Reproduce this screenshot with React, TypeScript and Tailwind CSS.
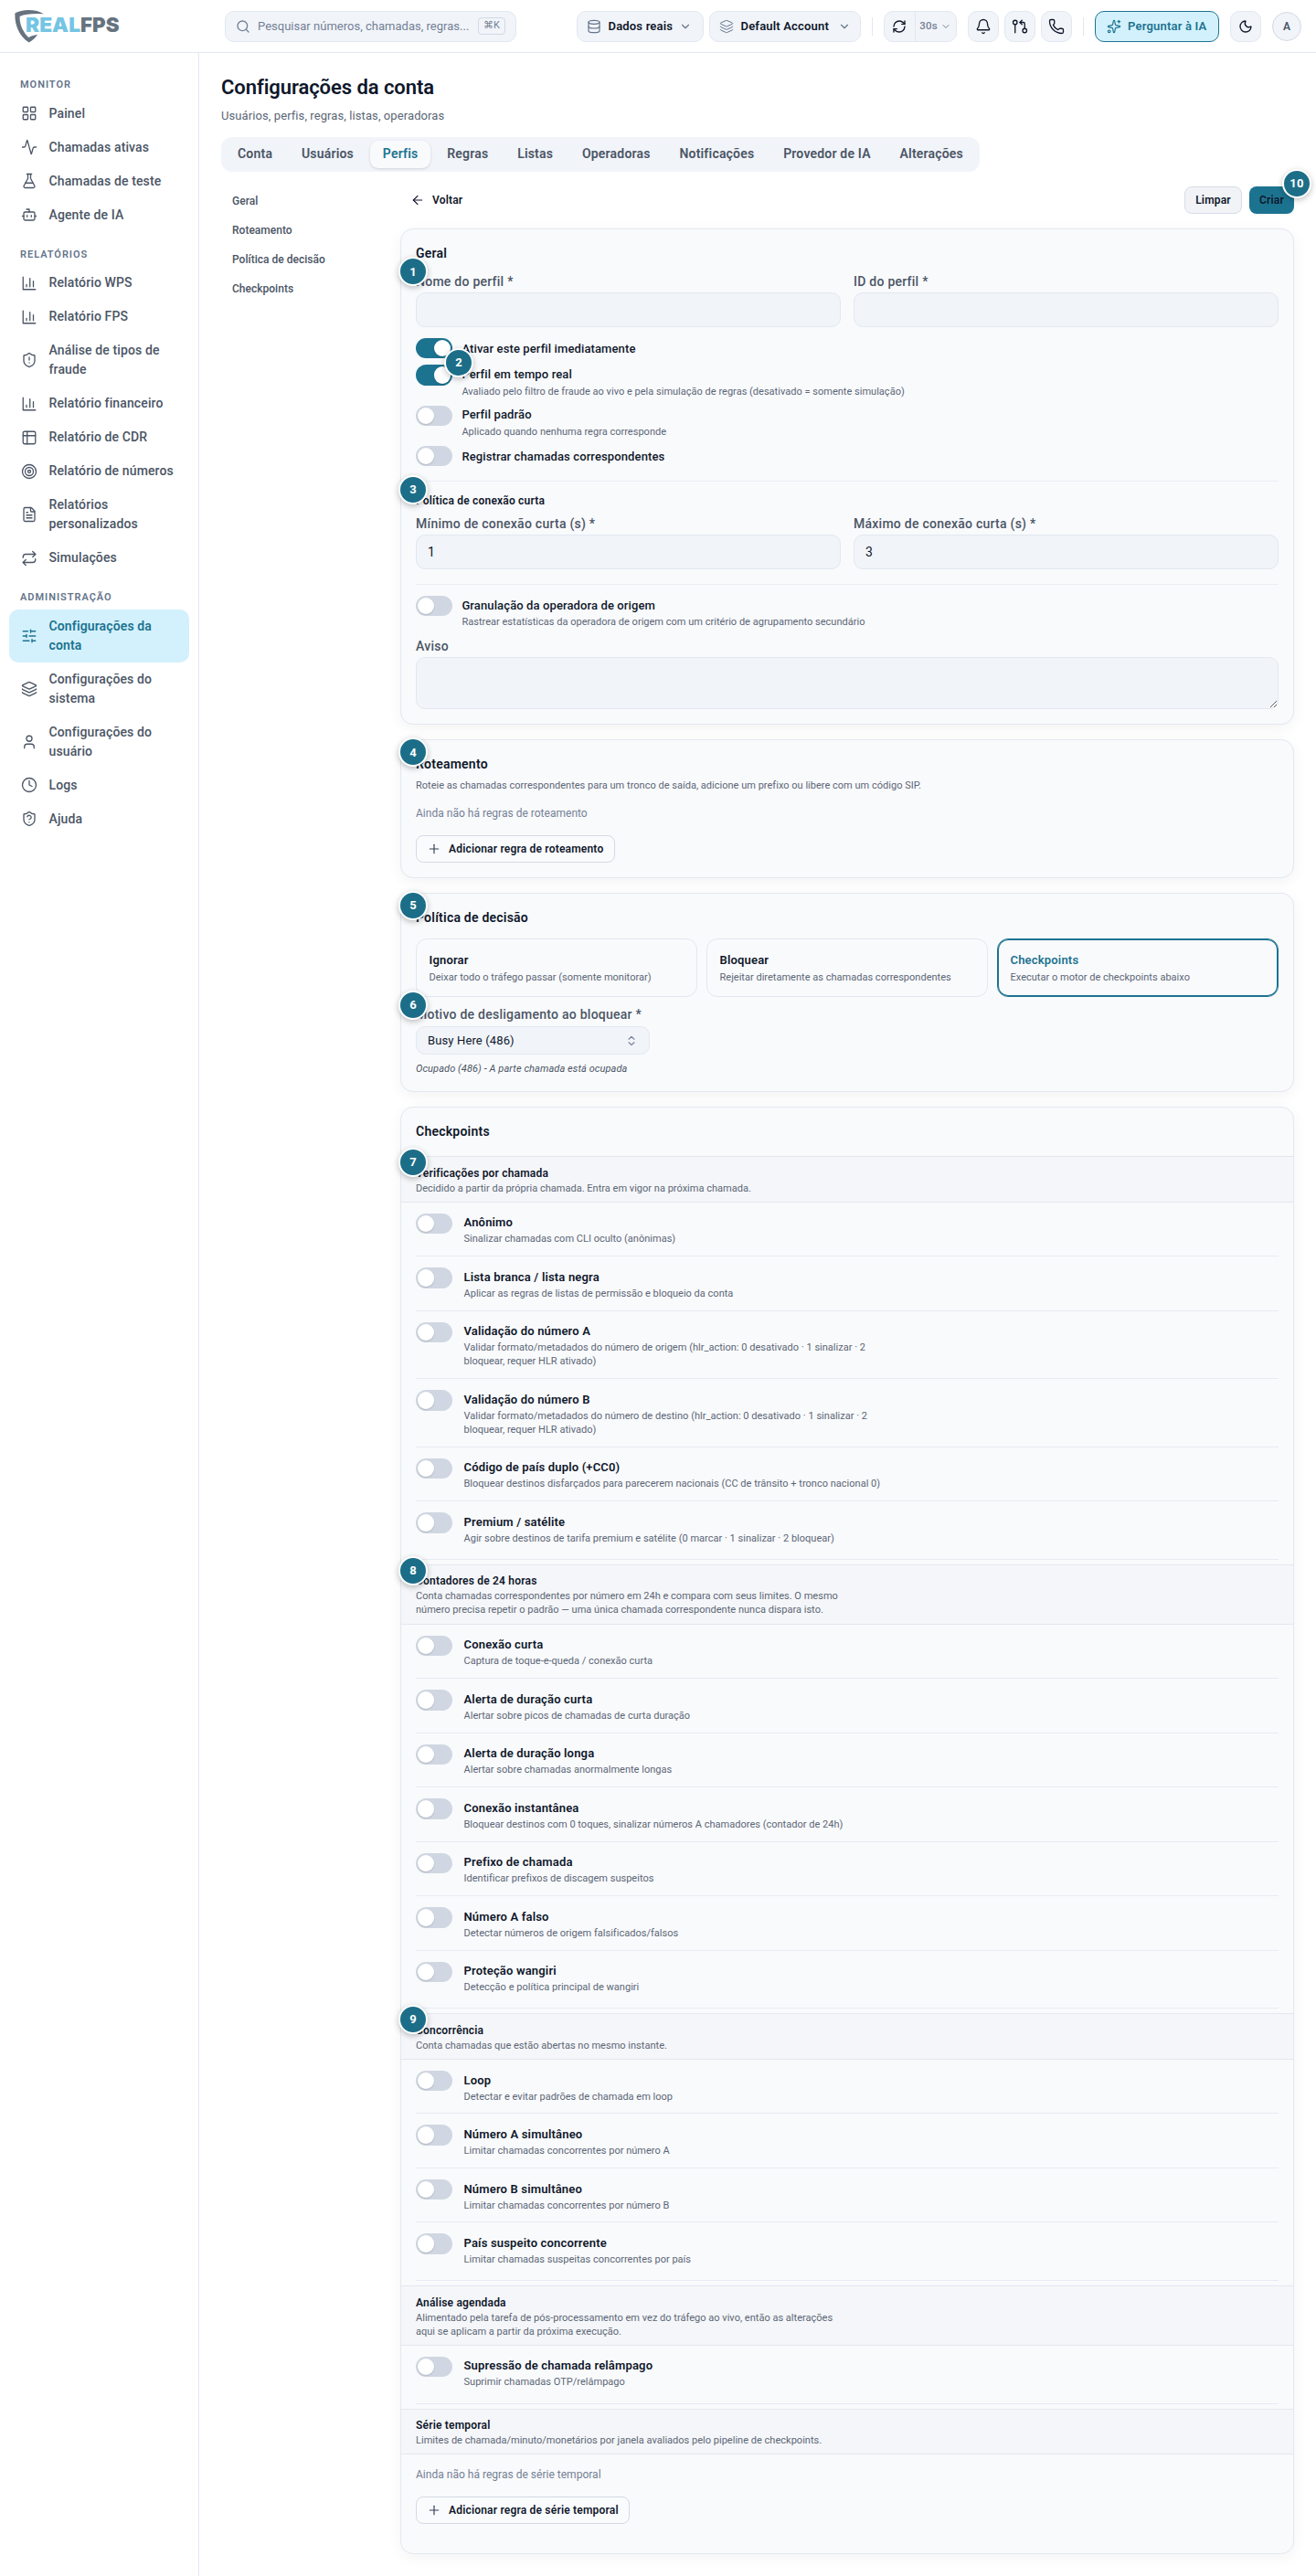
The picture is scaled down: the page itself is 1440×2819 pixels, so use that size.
import type { ReactNode } from 'react';
import clsx from 'clsx';
import {
  Activity,
  ArrowLeft,
  Bell,
  Bot,
  ChevronDown,
  ChevronsUpDown,
  Clock,
  Database,
  FileText,
  FlaskConical,
  GitPullRequestArrow,
  Layers,
  LayoutGrid,
  Moon,
  Phone,
  Plus,
  RefreshCw,
  Repeat,
  Search,
  ShieldAlert,
  ShieldQuestionMark,
  SlidersHorizontal,
  Sparkles,
  Target,
  User,
} from 'lucide-react';

type IconType = (props: { className?: string; strokeWidth?: number }) => ReactNode;

const ChartIcon: IconType = ({ className, strokeWidth = 2 }) => (
  <svg className={className} viewBox="0 0 24 24" fill="none" stroke="currentColor" strokeWidth={strokeWidth} strokeLinecap="round" strokeLinejoin="round">
    <path d="M3 3v18h18" />
    <path d="M18 17V9" />
    <path d="M13 17V5" />
    <path d="M8 17v-3" />
  </svg>
);

const TableIcon: IconType = ({ className, strokeWidth = 2 }) => (
  <svg className={className} viewBox="0 0 24 24" fill="none" stroke="currentColor" strokeWidth={strokeWidth} strokeLinecap="round" strokeLinejoin="round">
    <rect x="3" y="3" width="18" height="18" rx="2" />
    <path d="M3 9h18" />
    <path d="M9 3v18" />
  </svg>
);

const navGroups: { title: string; items: { label: string; icon: IconType; active?: boolean }[] }[] = [
  {
    title: 'Monitor',
    items: [
      { label: 'Painel', icon: LayoutGrid },
      { label: 'Chamadas ativas', icon: Activity },
      { label: 'Chamadas de teste', icon: FlaskConical },
      { label: 'Agente de IA', icon: Bot },
    ],
  },
  {
    title: 'Relatórios',
    items: [
      { label: 'Relatório WPS', icon: ChartIcon },
      { label: 'Relatório FPS', icon: ChartIcon },
      { label: 'Análise de tipos de fraude', icon: ShieldAlert },
      { label: 'Relatório financeiro', icon: ChartIcon },
      { label: 'Relatório de CDR', icon: TableIcon },
      { label: 'Relatório de números', icon: Target },
      { label: 'Relatórios personalizados', icon: FileText },
      { label: 'Simulações', icon: Repeat },
    ],
  },
  {
    title: 'Administração',
    items: [
      { label: 'Configurações da conta', icon: SlidersHorizontal, active: true },
      { label: 'Configurações do sistema', icon: Layers },
      { label: 'Configurações do usuário', icon: User },
      { label: 'Logs', icon: Clock },
      { label: 'Ajuda', icon: ShieldQuestionMark },
    ],
  },
];

const tabs = ['Conta', 'Usuários', 'Perfis', 'Regras', 'Listas', 'Operadoras', 'Notificações', 'Provedor de IA', 'Alterações'];

const anchors = ['Geral', 'Roteamento', 'Política de decisão', 'Checkpoints'];

const decisions = [
  { title: 'Ignorar', text: 'Deixar todo o tráfego passar (somente monitorar)' },
  { title: 'Bloquear', text: 'Rejeitar diretamente as chamadas correspondentes' },
  { title: 'Checkpoints', text: 'Executar o motor de checkpoints abaixo', selected: true },
];

const checkpointGroups: { title: string; text: string; badge?: number; rows: [string, string, boolean?][] }[] = [
  {
    title: 'Verificações por chamada',
    text: 'Decidido a partir da própria chamada. Entra em vigor na próxima chamada.',
    badge: 7,
    rows: [
      ['Anônimo', 'Sinalizar chamadas com CLI oculto (anônimas)'],
      ['Lista branca / lista negra', 'Aplicar as regras de listas de permissão e bloqueio da conta'],
      ['Validação do número A', 'Validar formato/metadados do número de origem (hlr_action: 0 desativado · 1 sinalizar · 2 bloquear, requer HLR ativado)', true],
      ['Validação do número B', 'Validar formato/metadados do número de destino (hlr_action: 0 desativado · 1 sinalizar · 2 bloquear, requer HLR ativado)', true],
      ['Código de país duplo (+CC0)', 'Bloquear destinos disfarçados para parecerem nacionais (CC de trânsito + tronco nacional 0)'],
      ['Premium / satélite', 'Agir sobre destinos de tarifa premium e satélite (0 marcar · 1 sinalizar · 2 bloquear)'],
    ],
  },
  {
    title: 'Contadores de 24 horas',
    text: 'Conta chamadas correspondentes por número em 24h e compara com seus limites. O mesmo número precisa repetir o padrão — uma única chamada correspondente nunca dispara isto.',
    badge: 8,
    rows: [
      ['Conexão curta', 'Captura de toque-e-queda / conexão curta'],
      ['Alerta de duração curta', 'Alertar sobre picos de chamadas de curta duração'],
      ['Alerta de duração longa', 'Alertar sobre chamadas anormalmente longas'],
      ['Conexão instantânea', 'Bloquear destinos com 0 toques, sinalizar números A chamadores (contador de 24h)'],
      ['Prefixo de chamada', 'Identificar prefixos de discagem suspeitos'],
      ['Número A falso', 'Detectar números de origem falsificados/falsos'],
      ['Proteção wangiri', 'Detecção e política principal de wangiri'],
    ],
  },
  {
    title: 'Concorrência',
    text: 'Conta chamadas que estão abertas no mesmo instante.',
    badge: 9,
    rows: [
      ['Loop', 'Detectar e evitar padrões de chamada em loop'],
      ['Número A simultâneo', 'Limitar chamadas concorrentes por número A'],
      ['Número B simultâneo', 'Limitar chamadas concorrentes por número B'],
      ['País suspeito concorrente', 'Limitar chamadas suspeitas concorrentes por país'],
    ],
  },
  {
    title: 'Análise agendada',
    text: 'Alimentado pela tarefa de pós-processamento em vez do tráfego ao vivo, então as alterações aqui se aplicam a partir da próxima execução.',
    rows: [['Supressão de chamada relâmpago', 'Suprimir chamadas OTP/relâmpago']],
  },
];

function Badge({ n, className }: { n: number; className?: string }) {
  return (
    <span
      className={clsx(
        'absolute z-10 flex size-8 items-center justify-center rounded-full border-2 border-white bg-[#1c6e88] text-[13px] font-bold text-white shadow-[0_2px_6px_rgba(0,0,0,0.25)]',
        className,
      )}
    >
      {n}
    </span>
  );
}

function Toggle({ on }: { on?: boolean }) {
  return (
    <span className={clsx('flex h-[22.4px] w-10 shrink-0 items-center rounded-full px-[2px]', on ? 'justify-end bg-[#1c7390]' : 'bg-[#d0d7e2]')}>
      <span className="size-[18.4px] rounded-full bg-white shadow-[0_1px_2px_rgba(0,0,0,0.15)]" />
    </span>
  );
}

function Card({ children, className }: { children: ReactNode; className?: string }) {
  return (
    <section className={clsx('relative rounded-[14px] border border-[#e2e8f0] bg-[#f9fafc] shadow-[0_4px_16px_rgba(0,0,0,0.05)]', className)}>
      {children}
    </section>
  );
}

function CardTitle({ children }: { children: ReactNode }) {
  return <h2 className="text-[14px] leading-[21.5px] font-semibold tracking-[0.016em]">{children}</h2>;
}

function Field({ label, value = '', badge }: { label: string; value?: string; badge?: ReactNode }) {
  return (
    <div className="relative flex-1">
      <label className="block text-[14px] leading-5 font-medium tracking-[0.018em] text-[#4b5565]">{label}</label>
      <input readOnly value={value} className="mt-[2px] block h-[38.2px] w-full rounded-[10px] border border-[#e2e8f0] bg-[#f1f4f9] px-3 text-[14px] text-[#0f172a]" />
      {badge}
    </div>
  );
}

function SwitchRow({ title, text, on, badge }: { title: string; text?: string; on?: boolean; badge?: ReactNode }) {
  return (
    <div className={clsx('relative flex gap-[10.4px]', text ? 'h-[37.2px]' : 'h-[22.4px]')}>
      <Toggle on={on} />
      <div className={text ? 'pt-[1.8px]' : 'pt-[3.4px]'}>
        <p className="text-[13px] leading-[18px] font-medium tracking-[0.009em]">{title}</p>
        {text && <p className="mt-[1.8px] text-[11px] leading-4 text-[#5b6676]">{text}</p>}
      </div>
      {badge}
    </div>
  );
}

function GroupHeader({ title, text, badge }: { title: string; text: string; badge?: number }) {
  return (
    <div className="relative border-y border-[#e2e8f0] bg-[#f5f6f9] px-4 pt-[9.4px] pb-[7.2px]">
      <h3 className="text-[12px] leading-[17px] font-semibold tracking-[0.016em]">{title}</h3>
      <p className="max-w-[470px] text-[11px] leading-[15px] text-[#5b6676]">{text}</p>
      {badge && <Badge n={badge} className="-top-[10.5px] -left-[3px]" />}
    </div>
  );
}

function AddButton({ children }: { children: ReactNode }) {
  return (
    <button className="flex h-[29.6px] items-center gap-[8px] rounded-lg border border-[#d3dae4] bg-[#fafbfd] pr-[11.5px] pl-[11px] text-[12px] font-semibold tracking-[0.016em]">
      <Plus className="size-4 text-[#334155]" strokeWidth={1.75} />
      {children}
    </button>
  );
}

function Logo() {
  return (
    <svg className="mt-px ml-4 h-[38px] w-[118px]" viewBox="0 0 118 38">
      <path
        d="M32 5.2C24-.2 8-.6.4 4.6 0 16 4 29 15.8 36.4 20 34 23 31.5 25 27.8L18.2 29.4 15.4 31C9.5 25.5 5.2 17 5.6 8 12 4.8 22 4.6 32 5.2Z"
        fill="#66737f"
      />
      <text x="12" y="24.5" fontFamily="Inter" fontSize="22" fontWeight="900" textLength="60" lengthAdjust="spacingAndGlyphs" fill="#74c5e3">REAL</text>
      <text x="72" y="24.5" fontFamily="Inter" fontSize="22" fontWeight="900" textLength="42.5" lengthAdjust="spacingAndGlyphs" fill="#66737f">FPS</text>
    </svg>
  );
}

const headerBox = 'flex h-[34px] items-center rounded-[10px] border border-[#e2e8f0] bg-[#f1f4f9]';

function Header() {
  return (
    <header className="flex h-[58px] items-center border-b border-[#e2e8f0] bg-white pr-4">
      <div className="flex w-[246px]">
        <Logo />
      </div>
      <div className={clsx(headerBox, 'w-[319px] justify-between pr-[11px] pl-[11px] text-[13px] text-[#748196]')}>
        <span className="flex items-center gap-2">
          <Search className="size-4" />
          <span>Pesquisar números, chamadas, regras...</span>
        </span>
        <kbd className="flex h-[19px] w-[30px] items-center justify-center rounded border border-[#d3dae4] font-[Roboto,'DejaVu_Sans'] text-[11px]">⌘K</kbd>
      </div>
      <div className="ml-auto flex items-center gap-3">
        <div className="flex gap-[6px] text-[13px] font-semibold tracking-[0.014em]">
          <button className={clsx(headerBox, 'w-[139px] pr-3 pl-[10px]')}>
            <Database className="mr-2 size-4 text-[#64748b]" strokeWidth={1.75} />
            Dados reais
            <ChevronDown className="ml-auto size-[14px] text-[#64748b]" />
          </button>
          <button className={clsx(headerBox, 'w-[166px] pr-[10px] pl-[10px]')}>
            <Layers className="mr-2 size-4 text-[#64748b]" strokeWidth={1.5} />
            Default Account
            <ChevronDown className="ml-auto size-[14px] text-[#64748b]" />
          </button>
        </div>
        <span className="h-5 w-px bg-[#e2e8f0]" />
        <div className={clsx(headerBox, 'w-20')}>
          <span className="flex h-full w-[34px] items-center justify-center border-r border-[#e2e8f0]">
            <RefreshCw className="size-4" />
          </span>
          <span className="flex flex-1 items-center justify-center gap-[3px] text-[11.5px] font-medium tracking-[0.02em] text-[#748196]">
            30s
            <ChevronDown className="size-[12px]" />
          </span>
        </div>
        <div className="flex gap-[6px]">
          {[Bell, GitPullRequestArrow, Phone].map((Icon, i) => (
            <button key={i} className={clsx(headerBox, 'w-[34px] justify-center')}>
              <Icon className="size-[18px]" strokeWidth={1.75} />
            </button>
          ))}
        </div>
        <span className="h-5 w-px bg-[#e2e8f0]" />
        <button className="flex h-[34px] w-[136.5px] items-center justify-center gap-[7px] rounded-[10px] border border-[#1c7390] bg-[#d3f1fc] text-[13px] font-semibold tracking-[0.014em] text-[#1c7390]">
          <Sparkles className="size-4" strokeWidth={1.75} />
          Perguntar à IA
        </button>
        <button className={clsx(headerBox, 'w-[34px] justify-center')}>
          <Moon className="size-4" />
        </button>
        <span className="flex size-8 items-center justify-center rounded-full border border-[#d3dae4] bg-[#f1f4f9] text-[12px] font-semibold text-[#4b5565]">A</span>
      </div>
    </header>
  );
}

function Sidebar() {
  return (
    <aside className="w-[218px] shrink-0 border-r border-[#e2e8f0] bg-white px-[10px] pt-[10.4px] text-[#4b5565]">
      {navGroups.map(group => (
        <div key={group.title}>
          <h4 className="h-[37.5px] px-3 pt-[14px] text-[11px] leading-[22px] font-semibold tracking-[0.088em] text-[#64748b] uppercase">{group.title}</h4>
          {group.items.map(({ label, icon: Icon, active }) => (
            <a
              key={label}
              className={clsx(
                'flex items-center gap-[12.5px] rounded-[10px] py-2 pr-2 pl-[13px] text-[14px] leading-[21px] tracking-[0.009em]',
                active ? 'bg-[#d3f1fc] font-semibold text-[#1c7390]' : 'font-medium',
              )}
            >
              <Icon className="size-[18px] shrink-0" strokeWidth={1.75} />
              <span>{label}</span>
            </a>
          ))}
        </div>
      ))}
    </aside>
  );
}

function GeneralCard() {
  return (
    <Card className="p-4">
      <CardTitle>Geral</CardTitle>
      <div className="mt-[9.5px] flex gap-[14px]">
        <Field label="Nome do perfil *" badge={<Badge n={1} className="-top-[16.5px] -left-[19px]" />} />
        <Field label="ID do perfil *" />
      </div>
      <div className="mt-3 space-y-[7px]">
        <SwitchRow title="Ativar este perfil imediatamente" on />
        <SwitchRow
          title="Perfil em tempo real"
          text="Avaliado pelo filtro de fraude ao vivo e pela simulação de regras (desativado = somente simulação)"
          on
          badge={<Badge n={2} className="-top-[18.5px] left-[31px]" />}
        />
        <SwitchRow title="Perfil padrão" text="Aplicado quando nenhuma regra corresponde" />
        <SwitchRow title="Registrar chamadas correspondentes" />
      </div>
      <div className="relative mt-4 border-t border-[#e9edf3] pt-3">
        <h3 className="text-[12px] leading-[18px] font-semibold tracking-[0.016em]">Política de conexão curta</h3>
        <div className="mt-[5.3px] flex gap-[14px]">
          <Field label="Mínimo de conexão curta (s) *" value="1" />
          <Field label="Máximo de conexão curta (s) *" value="3" />
        </div>
        <Badge n={3} className="-top-[7px] -left-[19px]" />
      </div>
      <div className="mt-4 border-t border-[#e9edf3] pt-3">
        <SwitchRow title="Granulação da operadora de origem" text="Rastrear estatísticas da operadora de origem com um critério de agrupamento secundário" />
      </div>
      <label className="mt-[8.5px] block text-[14px] leading-5 font-medium tracking-[0.018em] text-[#4b5565]">Aviso</label>
      <textarea readOnly className="mt-[2px] block h-[57px] w-full resize-y rounded-[10px] border border-[#e2e8f0] bg-[#f1f4f9]" />
    </Card>
  );
}

function RoutingCard() {
  return (
    <Card className="p-4">
      <Badge n={4} className="-top-[3px] -left-[3px]" />
      <CardTitle>Roteamento</CardTitle>
      <p className="mt-[4.4px] text-[11px] leading-4 text-[#5b6676]">Roteie as chamadas correspondentes para um tronco de saída, adicione um prefixo ou libere com um código SIP.</p>
      <p className="mt-[12.7px] mb-[15px] text-[12px] leading-[18px] text-[#748196]">Ainda não há regras de roteamento</p>
      <AddButton>Adicionar regra de roteamento</AddButton>
    </Card>
  );
}

function DecisionCard() {
  return (
    <Card className="p-4">
      <Badge n={5} className="-top-[3px] -left-[3px]" />
      <CardTitle>Política de decisão</CardTitle>
      <div className="mt-3 grid grid-cols-3 gap-[10px]">
        {decisions.map(d => (
          <div
            key={d.title}
            className={clsx('h-[63.6px] rounded-[12px] border px-[13.5px] pt-[13.5px]', d.selected ? 'border-[#1c7390] inset-ring inset-ring-[#1c7390]' : 'border-[#e2e8f0]')}
          >
            <p className={clsx('text-[13px] leading-[18px] font-semibold tracking-[0.014em]', d.selected && 'text-[#1c7390]')}>{d.title}</p>
            <p className="mt-[2.6px] text-[11px] leading-4 text-[#5b6676]">{d.text}</p>
          </div>
        ))}
      </div>
      <div className="relative mt-[9.3px]">
        <label className="block text-[14px] leading-5 font-medium tracking-[0.018em] text-[#4b5565]">Motivo de desligamento ao bloquear *</label>
        <div className="mt-[3px] flex h-[31.5px] w-64 items-center justify-between rounded-[10px] border border-[#e2e8f0] bg-[#f1f4f9] px-3 text-[13px] tracking-[0.01em]">
          Busy Here (486)
          <ChevronsUpDown className="size-[14px] text-[#748196]" />
        </div>
        <p className="mt-[7.2px] text-[11px] leading-4 text-[#4b5565] italic tracking-[0.008em]">Ocupado (486) - A parte chamada está ocupada</p>
        <Badge n={6} className="-top-4 -left-[19px]" />
      </div>
    </Card>
  );
}

function CheckpointsCard() {
  return (
    <Card className="pt-4 pb-8">
      <div className="px-4 pb-4">
        <CardTitle>Checkpoints</CardTitle>
      </div>
      {checkpointGroups.map(group => (
        <div key={group.title}>
          <GroupHeader title={group.title} text={group.text} badge={group.badge} />
          <div className="px-4 pb-[5px]">
            {group.rows.map(([title, text, tall]) => (
              <div
                key={title}
                className={clsx(
                  'flex gap-[12.5px] border-b border-[#e6ebf2] pt-3 last:h-[63.8px]',
                  tall ? 'h-[74.5px]' : 'h-[59.5px]',
                )}
              >
                <Toggle />
                <div className="pt-[1.6px]">
                  <p className="text-[13px] leading-[18px] font-semibold tracking-[0.013em]">{title}</p>
                  <p className="mt-px max-w-[470px] text-[11px] leading-[15px] text-[#5b6676]">{text}</p>
                </div>
              </div>
            ))}
          </div>
        </div>
      ))}
      <GroupHeader title="Série temporal" text="Limites de chamada/minuto/monetários por janela avaliados pelo pipeline de checkpoints." />
      <div className="px-4 pt-[12.4px]">
        <p className="mb-[15.7px] text-[12px] leading-[18px] text-[#748196]">Ainda não há regras de série temporal</p>
        <AddButton>Adicionar regra de série temporal</AddButton>
      </div>
    </Card>
  );
}

export default function App() {
  return (
    <div className="flex h-[2819px] flex-col overflow-hidden bg-white font-[Roboto,sans-serif] tracking-[0.001em] text-[#0f172a]">
      <Header />
      <div className="flex flex-1">
        <Sidebar />
        <main className="flex-1 px-6 pt-6">
          <h1 className="text-[22px] leading-7 font-semibold tracking-[-0.003em]">Configurações da conta</h1>
          <p className="mt-2 text-[13px] leading-[18px] tracking-[0.007em] text-[#5b6676]">Usuários, perfis, regras, listas, operadoras</p>
          <div className="mt-[14px] flex h-[37.5px] w-[830px] items-center justify-between rounded-[12px] bg-[#f1f4f9] p-1">
            {tabs.map(tab => (
              <button
                key={tab}
                className={clsx(
                  'h-[29.5px] rounded-[9px] px-[14px] text-[14px] font-semibold tracking-[0.014em]',
                  tab === 'Perfis' ? 'bg-[#f9fafc] text-[#1c7390] shadow-[0_1px_3px_rgba(0,0,0,0.14)]' : 'text-[#4b5565]',
                )}
              >
                {tab}
              </button>
            ))}
          </div>
          <div className="mt-4 flex gap-4">
            <nav className="w-[180px] shrink-0 text-[12px] font-medium text-[#4b5565]">
              {anchors.map(a => (
                <a key={a} className="flex h-8 items-center px-3">{a}</a>
              ))}
            </nav>
            <div className="flex-1">
              <div className="mb-4 flex h-[30.4px] items-center gap-2 text-[12px] font-semibold tracking-[0.016em]">
                <button className="mr-auto flex items-center gap-[8px] pl-[11px]">
                  <ArrowLeft className="size-4" strokeWidth={1.75} />
                  Voltar
                </button>
                <button className="h-full w-[63px] rounded-lg border border-[#d8dce8] bg-[#f1f3f7]">Limpar</button>
                <div className="relative h-full w-[49px]">
                  <button className="h-full w-full rounded-lg bg-[#1c7390]">Criar</button>
                  <Badge n={10} className="-top-[19px] -right-[19px]" />
                </div>
              </div>
              <div className="flex flex-col gap-4">
                <GeneralCard />
                <RoutingCard />
                <DecisionCard />
                <CheckpointsCard />
              </div>
            </div>
          </div>
        </main>
      </div>
    </div>
  );
}
